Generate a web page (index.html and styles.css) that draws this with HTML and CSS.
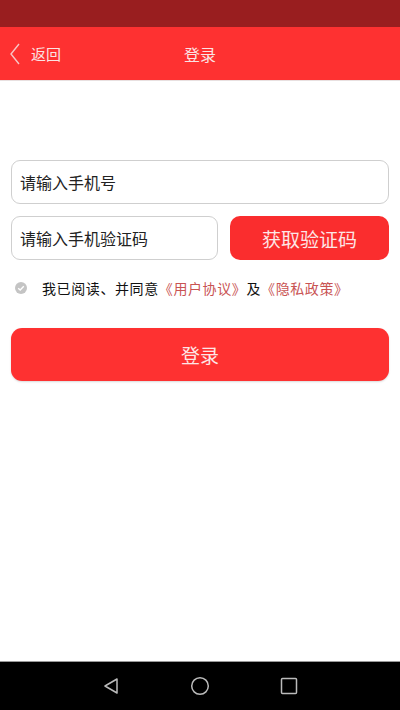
FILE: index.html
```html
<!DOCTYPE html>
<html lang="zh-CN">
<head>
  <meta charset="UTF-8" />
  <meta name="viewport" content="width=device-width, initial-scale=1.0" />
  <title>登录</title>
  <link rel="stylesheet" href="styles.css">
</head>
<body>
  <div class="status-bar"></div>
  <header class="top-bar">
    <a class="back" href="#">
      <svg width="12" height="22" viewBox="0 0 12 22"><path d="M10 1 L2 11 L10 21" fill="none" stroke="#f7c6c6" stroke-width="1.4"/></svg>
      <span>返回</span>
    </a>
    <h1>登录</h1>
  </header>

  <main class="form">
    <input class="field" type="tel" placeholder="请输入手机号">
    <div class="code-row">
      <input class="field code" type="text" placeholder="请输入手机验证码">
      <button class="btn-code">获取验证码</button>
    </div>
    <div class="agree">
      <span class="check">
        <svg width="12" height="12" viewBox="0 0 12 12"><circle cx="6" cy="6" r="6" fill="#c4c4c4"/><path d="M3.2 6.2 L5.2 8 L8.8 4.2" fill="none" stroke="#fff" stroke-width="1.4"/></svg>
      </span>
      <span>我已阅读、并同意<a href="#">《用户协议》</a>及<a href="#">《隐私政策》</a></span>
    </div>
    <button class="btn-login">登录</button>
  </main>

  <nav class="nav-bar">
    <svg width="18" height="18" viewBox="0 0 18 18"><path d="M15 2 L3 9 L15 16 Z" fill="none" stroke="#bbb" stroke-width="1.5" stroke-linejoin="round"/></svg>
    <svg width="20" height="20" viewBox="0 0 20 20"><circle cx="10" cy="10" r="8.3" fill="none" stroke="#bbb" stroke-width="1.5"/></svg>
    <svg width="18" height="18" viewBox="0 0 18 18"><rect x="1.5" y="1.5" width="15" height="15" fill="none" stroke="#bbb" stroke-width="1.5" rx="1"/></svg>
  </nav>
</body>
</html>
```

FILE: styles.css
```css
body {
  margin: 0;
  font-family: "Noto Sans CJK SC", "Noto Sans", sans-serif;
  background: #fff;
  width: 400px;
  height: 710px;
  display: flex;
  flex-direction: column;
  overflow: hidden;
}
.status-bar {
  height: 27px;
  background: #991e1f;
}
.top-bar {
  height: 54px;
  background: #fe3131;
  display: flex;
  align-items: center;
  justify-content: center;
  position: relative;
  border-bottom: 1px solid #e8e0e0;
  box-sizing: border-box;
}
.top-bar h1 {
  margin: 0;
  font-size: 16px;
  font-weight: normal;
  color: #fbe3e3;
}
.back {
  position: absolute;
  left: 9px;
  top: 0;
  bottom: 0;
  display: flex;
  align-items: center;
  gap: 10px;
  color: #fbe3e3;
  text-decoration: none;
  font-size: 15px;
}
.form {
  flex: 1;
  padding: 79px 11px 0;
  display: flex;
  flex-direction: column;
}
.field {
  height: 44px;
  box-sizing: border-box;
  border: 1.5px solid #cfcfcf;
  border-radius: 9px;
  padding: 0 8px;
  font-family: inherit;
  font-size: 16px;
  color: #222;
  outline: none;
}
.field::placeholder {
  color: #222;
}
.code-row {
  display: flex;
  gap: 12px;
  margin-top: 12px;
}
.code-row .field {
  width: 207px;
}
.btn-code {
  flex: 1;
  height: 44px;
  border: none;
  border-radius: 10px;
  background: #fa2d2e;
  color: #fde6e6;
  font-family: inherit;
  font-size: 19px;
}
.agree {
  display: flex;
  align-items: center;
  margin-top: 18px;
  font-size: 14px;
  color: #111;
  letter-spacing: 0.6px;
}
.check {
  display: flex;
  width: 27px;
  padding-left: 4px;
}
.agree a {
  color: #c95353;
  text-decoration: none;
}
.btn-login {
  margin-top: 30px;
  height: 53px;
  border: none;
  border-radius: 11px;
  background: #fe3131;
  color: #fde6e6;
  font-family: inherit;
  font-size: 19px;
  box-shadow: 0 1px 2px rgba(0, 0, 0, 0.15);
}
.nav-bar {
  height: 48px;
  background: #000;
  border-top: 1px solid #999;
  display: flex;
  align-items: center;
  justify-content: center;
  gap: 70px;
}
```
